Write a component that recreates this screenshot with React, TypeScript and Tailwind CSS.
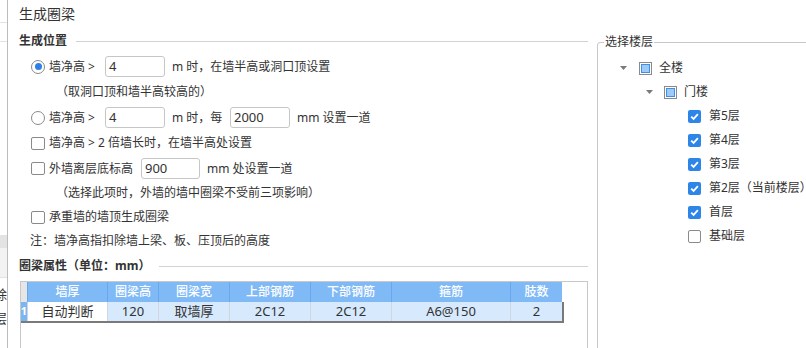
import React from 'react';

const Radio: React.FC<{ checked?: boolean }> = ({ checked }) => (
  <span className="w-[14px] h-[14px] shrink-0 rounded-full border border-[#8a8a8a] bg-white flex items-center justify-center">
    {checked && <span className="w-[7px] h-[7px] rounded-full bg-[#2f7fe6]" />}
  </span>
);

const Box: React.FC = () => (
  <span className="w-[14px] h-[13px] shrink-0 rounded-[2px] border border-[#8a8a8a] bg-white" />
);

const Field: React.FC<{ value: string; w: string }> = ({ value, w }) => (
  <div className={`${w} h-[21px] shrink-0 border border-[#c6c6c6] rounded-[3px] bg-white flex items-center px-[3px] text-[13px]`}>
    {value}
  </div>
);

const Tick: React.FC<{ on?: boolean }> = ({ on }) =>
  on ? (
    <span className="w-[13px] h-[13px] shrink-0 rounded-[2px] bg-[#2d85e8] flex items-center justify-center">
      <svg width="13" height="13" viewBox="0 0 13 13">
        <path d="M3.2 6.6 L5.6 8.9 L9.9 4.2" fill="none" stroke="#fff" strokeWidth="1.8" />
      </svg>
    </span>
  ) : (
    <span className="w-[13px] h-[13px] shrink-0 rounded-[2px] border border-[#8a8a8a] bg-white" />
  );

const Partial: React.FC<{ className?: string }> = ({ className }) => (
  <span className={`flex w-[13px] h-[13px] shrink-0 border border-[#8a8a8a] bg-white p-[1px] ${className ?? ''}`}>
    <span className="flex-1 bg-[#9ccbf7] border border-[#3f8fe8]" />
  </span>
);

const Caret: React.FC = () => (
  <svg width="7" height="4" viewBox="0 0 7 4" className="shrink-0">
    <polygon points="0,0 7,0 3.5,4" fill="#7a7a7a" />
  </svg>
);

const SectionHead: React.FC<{ title: string; h: string }> = ({ title, h }) => (
  <div className={`${h} shrink-0 flex items-center`}>
    <span className="font-bold text-[12px] whitespace-nowrap">{title}</span>
    <div className="flex-1 h-px bg-[#d2d2d2] ml-[9px]" />
  </div>
);

const cols = [
  { name: '墙厚', w: 'w-[80px]', v: '自动判断' },
  { name: '圈梁高', w: 'w-[51px]', v: '120' },
  { name: '圈梁宽', w: 'w-[71px]', v: '取墙厚' },
  { name: '上部钢筋', w: 'w-[81px]', v: '2C12' },
  { name: '下部钢筋', w: 'w-[81px]', v: '2C12' },
  { name: '箍筋', w: 'w-[119px]', v: 'A6@150' },
  { name: '肢数', w: 'w-[52px]', v: '2' },
];

const floors = [
  { name: '第5层', on: true },
  { name: '第4层', on: true },
  { name: '第3层', on: true },
  { name: '第2层（当前楼层）', on: true },
  { name: '首层', on: true },
  { name: '基础层', on: false },
];

export default function App() {
  return (
    <div className="w-[806px] h-[348px] overflow-hidden flex bg-white text-[#333] text-[12px] font-['Noto_Sans','Noto_Sans_CJK_SC',sans-serif]">
      {/* window behind the dialog */}
      <div className="w-[7px] shrink-0 flex flex-col overflow-hidden">
        <div className="h-[23px] shrink-0 border-b border-[#e2e2e2]" />
        <div className="h-[19px] shrink-0 border-b border-[#e2e2e2]" />
        <div className="h-[193px] shrink-0" />
        <div className="h-[13px] shrink-0 bg-[#e3e3e3]" />
        <div className="h-[30px] shrink-0 bg-[#f2f2f2] border-b border-[#e2e2e2]" />
        <div className="h-[5px] shrink-0" />
        <div className="h-[24px] shrink-0 flex items-center justify-end whitespace-nowrap text-[13px]">删除</div>
        <div className="h-[23px] shrink-0 flex items-center justify-end whitespace-nowrap text-[13px]">楼层</div>
      </div>

      <div className="flex-1 h-[348px] border-l border-[#bcbcbc] pl-[11px] flex flex-col">
        <div className="h-[26px] shrink-0 flex items-center text-[14px]">生成圈梁</div>

        <div className="flex flex-1 min-h-0">
          {/* left column */}
          <div className="w-[569px] shrink-0 flex flex-col">
            <SectionHead title="生成位置" h="h-[30px]" />

            <div className="h-[21px] shrink-0 flex items-center pl-[12px]">
              <Radio checked />
              <span className="ml-[4px] w-[56px] shrink-0">墙净高 &gt;</span>
              <Field value="4" w="w-[60px]" />
              <span className="ml-[7px]">m 时，在墙半高或洞口顶设置</span>
            </div>
            <div className="h-[30px] shrink-0 flex items-center pl-[37px]">（取洞口顶和墙半高较高的）</div>

            <div className="h-[21px] shrink-0 flex items-center pl-[12px]">
              <Radio />
              <span className="ml-[4px] w-[56px] shrink-0">墙净高 &gt;</span>
              <Field value="4" w="w-[60px]" />
              <span className="ml-[7px] w-[58px] shrink-0">m 时，每</span>
              <Field value="2000" w="w-[60px]" />
              <span className="ml-[7px]">mm 设置一道</span>
            </div>

            <div className="h-[30px] shrink-0 flex items-center pl-[12px]">
              <Box />
              <span className="ml-[4px]">墙净高 &gt; 2 倍墙长时，在墙半高处设置</span>
            </div>

            <div className="h-[21px] shrink-0 flex items-center pl-[12px]">
              <Box />
              <span className="ml-[4px] w-[92px] shrink-0">外墙离层底标高</span>
              <Field value="900" w="w-[59px]" />
              <span className="ml-[7px]">mm 处设置一道</span>
            </div>
            <div className="h-[28px] shrink-0 flex items-center pl-[37px]">（选择此项时，外墙的墙中圈梁不受前三项影响）</div>

            <div className="h-[20px] shrink-0 flex items-center pl-[12px]">
              <Box />
              <span className="ml-[4px]">承重墙的墙顶生成圈梁</span>
            </div>

            <div className="h-[28px] shrink-0 flex items-center pl-[11px]">注：墙净高指扣除墙上梁、板、压顶后的高度</div>

            <SectionHead title="圈梁属性（单位：mm）" h="h-[22px]" />

            <div className="mt-[4px] ml-[1px] flex-1 border border-b-0 border-[#c8c8c8]">
              <div className="flex h-[20px]">
                <div className="w-[6px] bg-[#e6e6e6]" />
                {cols.map((c) => (
                  <div key={c.name} className={`${c.w} bg-[#7fbaf6] border-l border-[#66a9ef] text-white flex items-center justify-center font-medium`}>
                    {c.name}
                  </div>
                ))}
              </div>
              <div className="flex w-[543px] h-[21px] border-b-2 border-r-2 border-[#7a7a7a]">
                <div className="w-[6px] bg-[#7ab6f3] text-white font-bold text-[11px] flex items-center justify-center">1</div>
                {cols.map((c, i) => (
                  <div
                    key={c.name}
                    className={`${c.w} ${i === 0 ? 'bg-white' : 'bg-[#d7e9fc]'} border-l border-[#cfd6de] flex items-center justify-center text-[13px]`}
                  >
                    {c.v}
                  </div>
                ))}
              </div>
            </div>
          </div>

          {/* right column */}
          <div className="ml-[9px] w-[230px] shrink-0 mt-[8px]">
            <fieldset className="h-[330px] border border-[#c8c8c8] rounded-[3px] px-0">
              <legend className="ml-[6px] px-[1px] text-[12px] leading-[16px]">选择楼层</legend>
              <div className="pt-[6px] flex flex-col">
                <div className="h-[24px] flex items-center pl-[22px]">
                  <Caret />
                  <Partial className="ml-[12px]" />
                  <span className="ml-[7px]">全楼</span>
                </div>
                <div className="h-[24px] flex items-center pl-[48px]">
                  <Caret />
                  <Partial className="ml-[11px]" />
                  <span className="ml-[7px]">门楼</span>
                </div>
                {floors.map((f) => (
                  <div key={f.name} className="h-[24px] flex items-center pl-[90px] whitespace-nowrap">
                    <Tick on={f.on} />
                    <span className="ml-[8px]">{f.name}</span>
                  </div>
                ))}
              </div>
            </fieldset>
          </div>
        </div>
      </div>
    </div>
  );
}
